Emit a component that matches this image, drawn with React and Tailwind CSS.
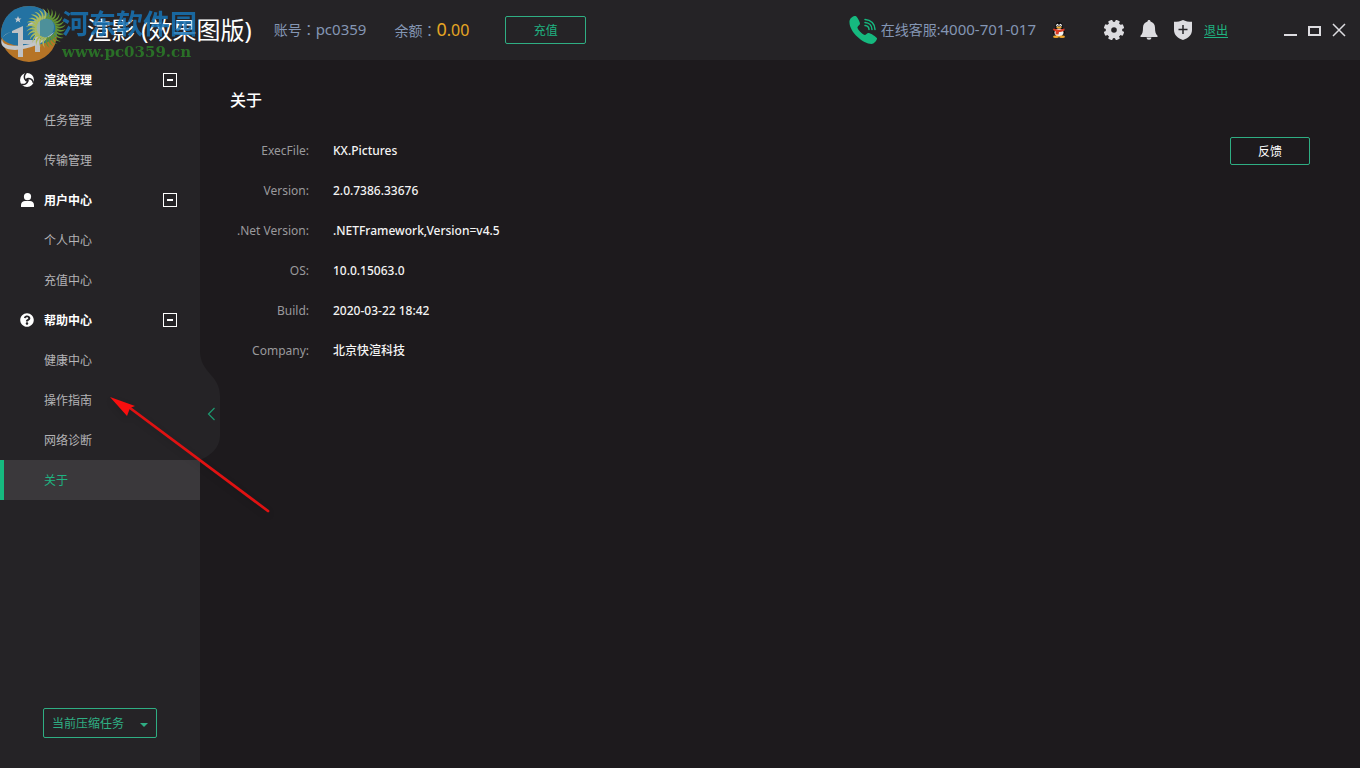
import { useState } from 'react';
import { FaQuestionCircle } from 'react-icons/fa';

const menu = [
    { title: '渲染管理', icon: RenderIcon, items: ['任务管理', '传输管理'] },
    { title: '用户中心', icon: UserIcon, items: ['个人中心', '充值中心'] },
    { title: '帮助中心', icon: HelpIcon, items: ['健康中心', '操作指南', '网络诊断', '关于'] },
];

const info = [
    ['ExecFile:', 'KX.Pictures'],
    ['Version:', '2.0.7386.33676'],
    ['.Net Version:', '.NETFramework,Version=v4.5'],
    ['OS:', '10.0.15063.0'],
    ['Build:', '2020-03-22 18:42'],
    ['Company:', '北京快渲科技'],
];

function RenderIcon() {
    return (
        <svg className="w-3.5 h-3.5" viewBox="0 0 14 14">
            <circle cx="7" cy="7" r="7" fill="#fff" />
            <g fill="none" stroke="#252326" strokeWidth="1.500">
                <path d="M6.200 0C3.600 2.400 3.800 5.400 6 7.600" />
                <path d="M6.200 0C3.600 2.400 3.800 5.400 6 7.600" transform="rotate(120 7 7)" />
                <path d="M6.200 0C3.600 2.400 3.800 5.400 6 7.600" transform="rotate(240 7 7)" />
            </g>
            <circle cx="7" cy="7" r="1.800" fill="#252326" />
        </svg>
    );
}

function UserIcon() {
    return (
        <svg className="w-3.5 h-3.5" viewBox="0 0 14 14" fill="#fff">
            <circle cx="7.500" cy="3.700" r="3.600" />
            <path d="M1 14v-2c0-2.600 2-4 4-4h5c2 0 4 1.400 4 4v2z" />
        </svg>
    );
}

function HelpIcon() {
    return <FaQuestionCircle className="w-3.5 h-3.5 text-white" />;
}

function PhoneIcon() {
    return (
        <svg className="w-7 h-7" viewBox="0 0 28 28">
            <path
                fill="#16b97f"
                d="M.5 5C1 2 4 0 6.500 0c1.500 0 4.500 6 4.500 7.500 0 2-3 2.500-2.500 4.500 1 2.500 4 5.500 6.500 6.800 1.800.8 2.800-2 4.800-1.800C21.500 17 27.500 21 28 22.300c.3 1.700-2.800 5.700-5.500 5.700C14 28-.5 15.500.5 5z"
            />
            <g fill="none" stroke="#16b97f" strokeWidth="1.500" strokeLinecap="round">
                <path d="M16 3.500c6 .3 10 4.500 10 10" />
                <path d="M16 6.500c4 .3 7 3 7 7" />
                <path d="M16 9.500c2.500.3 4 1.800 4 4" />
            </g>
        </svg>
    );
}

function PenguinIcon() {
    return (
        <svg className="w-3.5 h-4" viewBox="0 0 14 16">
            <path d="M3.500 6C3 2 4.500 0 7 0s4 2 3.500 6c2 2 3 4 2.800 6l-2-1.200H3L1 12C.5 10 1.500 8 3.500 6z" fill="#0c0b0d" />
            <ellipse cx="7" cy="10.500" rx="4.500" ry="4" fill="#f4f1ee" />
            <ellipse cx="5.500" cy="3.200" rx="1.200" ry="1.500" fill="#fff" />
            <ellipse cx="8.500" cy="3.200" rx="1.200" ry="1.500" fill="#fff" />
            <circle cx="5.800" cy="3.400" r=".5" />
            <circle cx="8.200" cy="3.400" r=".5" />
            <ellipse cx="7" cy="5.500" rx="2.800" ry="1" fill="#f0a92c" />
            <path d="M1.500 6.500c4 1.500 7 1.500 11 0v2c-2 1.200-4 1.500-5.500 1.500l-.5 2.400-3-.2.200-2.600L1 8z" fill="#d93a24" />
            <ellipse cx="4" cy="14.800" rx="3" ry="1.200" fill="#efa62b" />
            <ellipse cx="10" cy="14.800" rx="3" ry="1.200" fill="#efa62b" />
        </svg>
    );
}

function GearIcon() {
    return (
        <svg className="w-5 h-5" viewBox="0 0 20 20">
            <g fill="#dddce0">
                <circle cx="10" cy="10" r="8.300" />
                {[22.5, 67.5, 112.5, 157.5, 202.5, 247.5, 292.5, 337.5].map((a) => (
                    <rect key={a} x="7.800" y="-.3" width="4.400" height="5" rx="1" transform={`rotate(${a} 10 10)`} />
                ))}
            </g>
            <circle cx="10" cy="10" r="2.800" fill="#252326" />
        </svg>
    );
}

function BellIcon() {
    return (
        <svg className="w-[18px] h-5" viewBox="0 0 18 20" fill="#dddce0">
            <path d="M9 0c.9 0 1.400.6 1.500 1.400C13.400 2.200 15 4.700 15 7.500c0 4 .5 6.500 2.500 8.300V17H.5v-1.200C2.500 14 3 11.500 3 7.500c0-2.800 1.600-5.300 4.500-6.100C7.600.6 8.100 0 9 0z" />
            <path d="M6.500 17.500a2.500 2.300 0 005 0z" />
        </svg>
    );
}

function ShieldIcon() {
    return (
        <svg className="w-[18px] h-5" viewBox="0 0 18 20">
            <path d="M9 0c2.500 1.300 5.500 1.800 9 1.800V10c0 5-4 8.300-9 10-5-1.700-9-5-9-10V1.800C3.500 1.800 6.500 1.300 9 0z" fill="#dddce0" />
            <path d="M9 5v9M4.500 9.500h9" stroke="#252326" strokeWidth="1.500" />
        </svg>
    );
}

function WatermarkLogo() {
    const petals = Array.from({ length: 28 }, (_, i) => Math.round((i * 360) / 28));
    return (
        <svg className="w-[66px] h-16 shrink-0" viewBox="0 0 66 64">
            <circle cx="29" cy="34" r="28" fill="#d08327" />
            <path d="M1 37C0 18 13 6 29 6s28 13 28 29C49 47 10 52 1 37z" fill="#2380b8" />
            {/* towers */}
            <path d="M12 31l11-5v31h-5V33h-6z" fill="#d9dde0" />
            <path d="M28 24l12-6v34h-5V26h-7z" fill="#d9dde0" />
            <path d="M22 40h14v4H22z" fill="#d9dde0" />
            {/* orbit */}
            <path d="M14 31C5 33 0 38 3 42c5 7 34 5 51-10-10 15-45 24-52 13-3-6 3-12 12-14z" fill="#dfe3e6" />
            <path d="M18 16l1 2.500h2.500l-2 1.500.8 2.500-2.300-1.500-2.300 1.500.8-2.500-2-1.500H17z" fill="#e3e7ea" />
            {/* sunflower */}
            <circle cx="43" cy="27" r="11" fill="#7fc0a8" opacity=".55" />
            {petals.map((a) => (
                <path
                    key={a}
                    d="M45 18c3-2 4-5 2-10 3 3 4 8 0 11z"
                    fill={a > 170 ? '#c3d566' : '#6da637'}
                    transform={`rotate(${a} 46 28)`}
                />
            ))}
        </svg>
    );
}

function Watermark() {
    return (
        <div className="absolute left-0 top-0 flex pointer-events-none opacity-85">
            <WatermarkLogo />
            <div className="-ml-1 pt-2 whitespace-nowrap">
                <p className="text-[27px] leading-8 font-bold text-[#1873b5]">河东软件园</p>
                <p className="text-[15px] leading-6 font-bold text-[#2b7d28] font-['DejaVu_Serif',serif]">www.pc0359.cn</p>
            </div>
        </div>
    );
}

// full-width colon centred in its cell
function Colon() {
    return <span className="font-['Noto_Sans_CJK_TC',sans-serif]">：</span>;
}

function Header() {
    return (
        <header className="h-[60px] shrink-0 flex items-center justify-between pl-[87px] pr-[14px] bg-[#252326] text-sm text-[#8496b4]">
            <div className="flex items-center">
                <h1 className="text-2xl text-white">渲影 (效果图版)</h1>
                <span className="ml-[22px]">账号<Colon /><span className="text-[15px]">pc0359</span></span>
                <span className="ml-7 flex items-baseline">
                    余额<Colon />
                    <span className="text-lg leading-5 text-[#e5a623]">0</span>
                    <span className="text-base leading-5 text-[#e5a623]">.00</span>
                </span>
                <button type="button" className="ml-9 w-[81px] h-7 pt-px rounded-xs border border-[#2fae83] text-xs text-[#1fb381]">
                    充值
                </button>
            </div>
            <div className="flex items-center">
                <PhoneIcon />
                <span className="ml-1">在线客服:<span className="text-[15px]">4000-701-017</span></span>
                <button type="button" aria-label="QQ" className="ml-4">
                    <PenguinIcon />
                </button>
                <div className="ml-[38px] flex items-center gap-4">
                    <button type="button" aria-label="设置"><GearIcon /></button>
                    <button type="button" aria-label="消息"><BellIcon /></button>
                    <button type="button" aria-label="安全"><ShieldIcon /></button>
                </div>
                <a href="#logout" className="ml-3 pt-px text-xs text-[#1fb381] underline underline-offset-2">退出</a>
                <div className="ml-14 flex items-center gap-2.5 text-[#dddce0]">
                    <button type="button" aria-label="最小化">
                        <svg className="w-3.5 h-3.5" viewBox="0 0 14 14"><path d="M0 11h13v2H0z" fill="currentColor" /></svg>
                    </button>
                    <button type="button" aria-label="最大化">
                        <svg className="w-3.5 h-3.5" viewBox="0 0 14 14"><path d="M1 4h11v8H1z" fill="none" stroke="currentColor" strokeWidth="2" /></svg>
                    </button>
                    <button type="button" aria-label="关闭">
                        <svg className="w-3.5 h-3.5" viewBox="0 0 14 14"><path d="M1 1l12 12M13 1L1 13" stroke="currentColor" strokeWidth="1.500" /></svg>
                    </button>
                </div>
            </div>
        </header>
    );
}

function Sidebar() {
    const [active, setActive] = useState('关于');
    const [closed, setClosed] = useState([]);

    const toggle = (title) => {
        setClosed(closed.includes(title) ? closed.filter((t) => t !== title) : [...closed, title]);
    };

    return (
        <aside className="relative w-[200px] shrink-0 flex flex-col justify-between bg-[#252326] text-xs">
            <nav>
                {menu.map(({ title, icon: Icon, items }) => (
                    <section key={title}>
                        <div className="h-10 flex items-center pl-5 pr-[23px]">
                            <Icon />
                            <h2 className="ml-2.5 pt-0.5 flex-1 font-bold text-white">{title}</h2>
                            <button
                                type="button"
                                aria-label={title}
                                onClick={() => toggle(title)}
                                className="w-3.5 h-3.5 flex items-center justify-center border border-white"
                            >
                                <span className="w-1.5 h-0.5 bg-white" />
                            </button>
                        </div>
                        {!closed.includes(title) && items.map((item) => (
                            <a
                                key={item}
                                href="#menu"
                                onClick={() => setActive(item)}
                                className={
                                    item === active
                                        ? 'h-10 flex items-center pt-0.5 pl-10 border-l-4 border-[#16b97f] bg-[#3a383b] text-[#1fb381]'
                                        : 'h-10 flex items-center pt-0.5 pl-11 text-[#b4b3b6]'
                                }
                            >
                                {item}
                            </a>
                        ))}
                    </section>
                ))}
            </nav>

            <div className="relative self-start ml-[43px] mb-[30px]">
                <select
                    aria-label="当前压缩任务"
                    className="appearance-none w-[114px] h-[30px] pt-0.5 pl-2 rounded-xs border border-[#2fae83] bg-transparent text-[#2fae83]"
                >
                    <option>当前压缩任务</option>
                </select>
                <svg className="absolute right-2 top-3.5 w-2.5 h-1.5 pointer-events-none" viewBox="0 0 10 6">
                    <path d="M1 1h8L5 5z" fill="#2fae83" />
                </svg>
            </div>

            {/* collapse handle */}
            <button type="button" aria-label="收起" className="absolute left-full top-[290px]">
                <svg className="w-5 h-[110px]" viewBox="0 0 20 110">
                    <path d="M0 0c0 24 20 24 20 46v40c0 12-10 20-20 24z" fill="#252326" />
                    <path d="M14.500 58l-6 6 6 6" fill="none" stroke="#1d9a70" strokeWidth="1.200" />
                </svg>
            </button>
        </aside>
    );
}

function About() {
    return (
        <main className="flex-1 pt-5 pl-[30px] pr-[50px]">
            <h2 className="h-10 flex items-center text-base font-medium text-white">关于</h2>
            <div className="mt-[11px] flex items-start justify-between text-xs">
                <dl>
                    {info.map(([label, value]) => (
                        <div key={label} className="h-10 flex items-center gap-6">
                            <dt className="w-[79px] text-right whitespace-nowrap text-[#9a999c]">{label}</dt>
                            <dd className="font-medium text-[#f4f4f4]">{value}</dd>
                        </div>
                    ))}
                </dl>
                <button type="button" className="mt-1.5 w-20 h-7 pt-0.5 rounded-xs border border-[#2fae83] text-white">
                    反馈
                </button>
            </div>
        </main>
    );
}

export default function App() {
    return (
        <div className="relative min-h-screen flex flex-col bg-[#1d1a1d] font-['Noto_Sans','Noto_Sans_CJK_SC',sans-serif]">
            <Header />
            <div className="flex-1 flex">
                <Sidebar />
                <About />
            </div>
            <Watermark />

            {/* pointer arrow */}
            <svg className="absolute left-[108px] top-[392px] w-[166px] h-[126px] pointer-events-none drop-shadow-md" viewBox="0 0 166 126">
                <path d="M22 16L160 119" stroke="#e01212" strokeWidth="2.800" strokeLinecap="round" />
                <path d="M2 5l25 9-5 2-3 8z" fill="#f80f0f" />
            </svg>
        </div>
    );
}
